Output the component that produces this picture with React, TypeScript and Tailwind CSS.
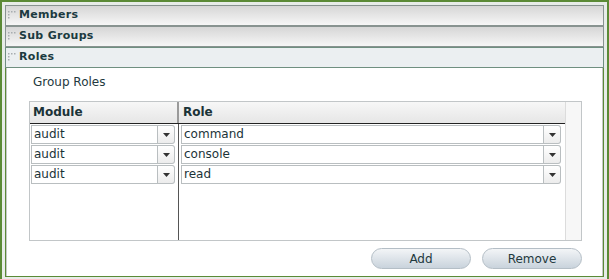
import React from 'react';

const Grip: React.FC = () => (
  <svg width="8" height="9" viewBox="0 0 8 9" className="shrink-0">
    {[0, 3, 6].map(x => <rect key={'t' + x} x={x} y={0} width="1.5" height="1.5" fill="#a8adb0" />)}
    {[3, 6].map(y => <rect key={'l' + y} x={0} y={y} width="1.5" height="1.5" fill="#a8adb0" />)}
  </svg>
);

const Header: React.FC<{ label: string; active?: boolean }> = ({ label, active }) => (
  <div
    className={
      'flex items-center gap-[3px] h-[21px] pl-[2px] border ' +
      (active
        ? 'bg-[#ebeff1] border-[#6f8f80]'
        : 'bg-gradient-to-b from-[#d6d6d6] to-[#f6f6f6] border-[#889390]')
    }
  >
    <Grip />
    <span className="font-bold text-[11px] text-[#1b3a40] tracking-[0.3px]">{label}</span>
  </div>
);

const Combo: React.FC<{ value: string; width: string }> = ({ value, width }) => (
  <div className={'flex h-[19px] ' + width}>
    <div className="flex-1 border border-[#b9bec0] bg-white text-[12px] leading-[17px] pl-[2px] text-[#1b3338]">
      {value}
    </div>
    <div className="w-[17px] border border-[#b9bec0] border-l-0 rounded-r-[3px] bg-gradient-to-b from-white to-[#ececec] flex items-center justify-center">
      <svg width="7" height="4" viewBox="0 0 7 4"><path d="M0 0h7L3.5 4z" fill="#333" /></svg>
    </div>
  </div>
);

const rows = [
  { module: 'audit', role: 'command' },
  { module: 'audit', role: 'console' },
  { module: 'audit', role: 'read' },
];

export default function App() {
  return (
    <div className="w-[609px] h-[279px] bg-[#e7ece8] border-t-2 border-l-2 border-r-2 border-[#5b8a36] pt-[3px] px-[3px]" style={{ fontFamily: '"DejaVu Sans", sans-serif' }}>
      <Header label="Members" />
      <Header label="Sub Groups" />
      <Header label="Roles" active />
      <div className="h-[209px] bg-white border-l border-r border-b border-[#5b8a36] shadow-[inset_1px_0_0_#c4c8c6,inset_-1px_0_0_#c4c8c6] pl-[23px] pr-[21px] pt-[5px]">
        <div className="text-[12px] text-[#23393e] pl-[4px]">Group Roles</div>
        <div className="mt-[10px] h-[140px] border border-[#c2c6c8] flex">
          <div className="flex-1 flex flex-col">
            <div className="flex h-[22px] bg-gradient-to-b from-[#f7f7f7] to-[#e6e6e6] border-b border-[#222]">
              <div className="w-[149px] border-r-2 border-[#9a9a9a] pl-[3px] font-bold text-[12px] leading-[20px] text-[#1b3338]">Module</div>
              <div className="flex-1 pl-[4px] font-bold text-[12px] leading-[20px] text-[#1b3338]">Role</div>
            </div>
            <div className="flex-1 flex">
              <div className="w-[149px] border-r border-[#555] pl-[1px] pt-[1px] flex flex-col gap-[1px]">
                {rows.map((r, i) => <Combo key={i} value={r.module} width="w-[144px]" />)}
              </div>
              <div className="flex-1 pl-[2px] pr-[4px] pt-[1px] flex flex-col gap-[1px]">
                {rows.map((r, i) => <Combo key={i} value={r.role} width="w-full" />)}
              </div>
            </div>
          </div>
          <div className="w-[16px] bg-[#f7f7f7] border-l border-[#dcdcdc]" />
        </div>
        <div className="flex justify-end gap-[11px] mt-[7px]">
          <button className="w-[100px] h-[21px] rounded-full border border-[#b4bec6] bg-gradient-to-b from-[#f3f5f7] to-[#c9d3dc] text-[12px] text-[#23393e]">Add</button>
          <button className="w-[100px] h-[21px] rounded-full border border-[#b4bec6] bg-gradient-to-b from-[#f3f5f7] to-[#c9d3dc] text-[12px] text-[#23393e]">Remove</button>
        </div>
      </div>
    </div>
  );
}
